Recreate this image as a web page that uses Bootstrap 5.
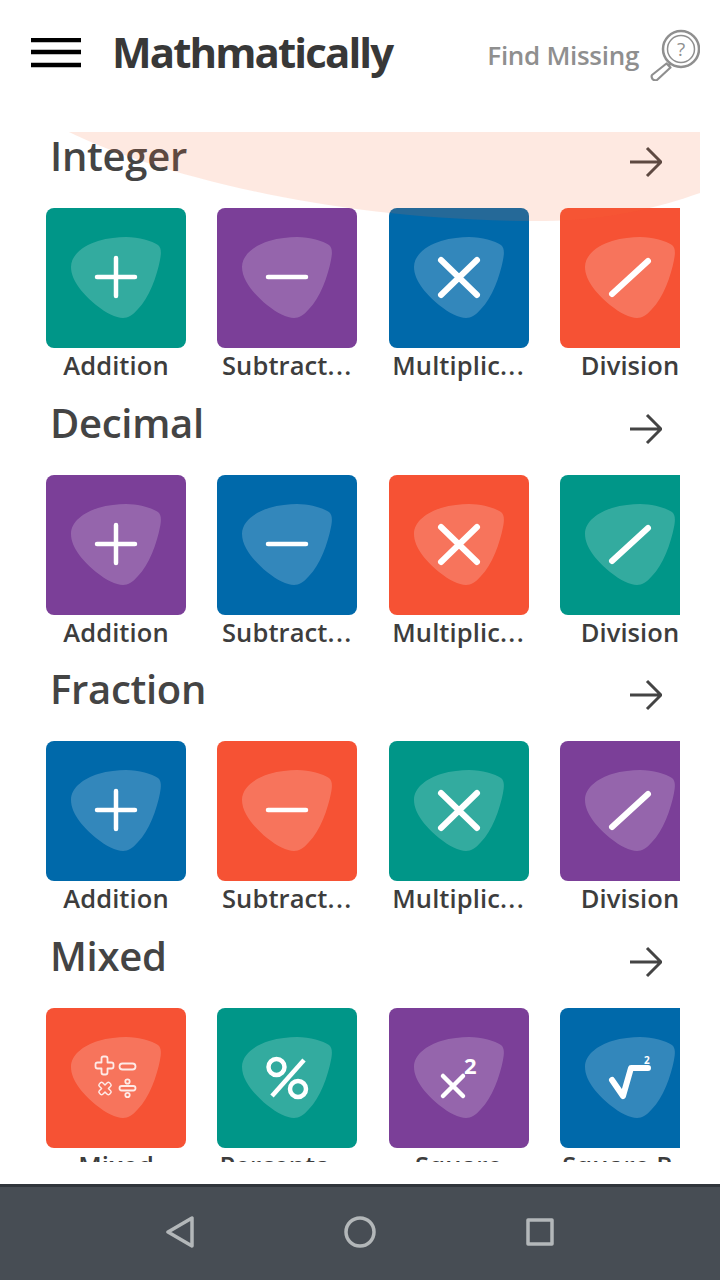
<!DOCTYPE html>
<html lang="en">
<head>
    <meta charset="UTF-8">
    <meta name="viewport" content="width=device-width, initial-scale=1.0">
    <link rel="stylesheet" href="https://cdn.jsdelivr.net/npm/bootstrap@5.3.0/dist/css/bootstrap.min.css">
    <title>Mathmatically</title>
    <style>
        html, body { height: 100%; }
        body {
            width: 720px;
            height: 1280px;
            overflow: hidden;
            background: #fff;
            font-family: "Open Sans", "Liberation Sans", sans-serif;
            color: #444;
        }
        .page { position: relative; height: 1280px; }

        .top-bar { height: 132px; padding: 0 20px 27px 31px; }
        .menu-btn { width: 50px; height: 30px; margin-right: 31px; line-height: 0; }
        .app-title { font-size: 42px; font-weight: 700; letter-spacing: -1.9px; color: #383838; margin: 0; }
        .find-text { font-size: 26px; font-weight: 600; letter-spacing: -.3px; color: #8f8f8f; margin: 6px 11px 0 0; }

        .sheet { height: 1030px; padding: 0 40px 0 46px; overflow: hidden; }
        .topic { height: 266.67px; }
        .topic-head { height: 76px; padding: 0 18px 0 4px; }
        .topic-name { font-size: 40px; line-height: 48px; font-weight: 600; letter-spacing: -.3px; color: #444; margin: 0; }
        .topic-arrow { margin-top: 14px; }
        .tile-row { gap: 31.33px; }
        .tile-col { flex: 0 0 140px; width: 140px; }
        /* the fourth column runs off the right side of the scroller */
        .tile-col:last-child { flex-basis: 120px; width: 120px; overflow: hidden; }
        .tile { display: block; width: 140px; height: 140px; border-radius: 8px; }
        .tile-col:last-child .tile { width: 120px; border-radius: 8px 0 0 8px; }
        .tile-name {
            display: block;
            width: 140px;
            font-size: 25.5px;
            line-height: 34px;
            font-weight: 600;
            letter-spacing: .1px;
            text-align: center;
            white-space: nowrap;
            color: #3d3d3d;
        }
        .dots { letter-spacing: 1.4px; }
        .teal { background: #009688; }
        .purple { background: #7b3f98; }
        .blue { background: #0069aa; }
        .orange { background: #f65234; }

        .blob { fill: #fff; fill-opacity: .2; }
        .glyph { fill: none; stroke: #fff; stroke-width: 4.5; stroke-linecap: round; stroke-linejoin: round; }
        .glyph-bold { stroke-width: 6; }
        .glyph-butt { stroke-linecap: butt; }
        .glyph-thin { fill: none; stroke: #fff; stroke-opacity: .85; stroke-width: 1.8; stroke-linejoin: round; }
        .glyph-num { fill: #fff; font-family: "Open Sans", sans-serif; font-weight: 700; }

        /* pink wash that sits on top of the first topic */
        .wash { position: absolute; left: 0; top: 0; pointer-events: none; }

        .sys-bar { height: 96px; margin-top: 22px; padding: 0 150px 3px; background: #474d54; border-top: 3px solid #30353b; }
        .sys-bar svg { fill: none; stroke: #b3b7b9; stroke-width: 3.5; stroke-linejoin: round; }
        .sys-slot { width: 60px; }
    </style>
</head>
<body>
    <svg width="0" height="0" class="position-absolute">
        <defs>
            <path id="blob" class="blob" d="M25 59C25 46 39 37 52 33C62 30 72 29 80 29C93 29 106 33 112 37C116 40 115 47 114 52C111 68 103 90 92 101C87 107 82 110 77 110C70 110 60 105 50 97C38 87 25 73 25 59Z"/>
            <path id="cross" d="M55.500 50.500a2 2 0 0 1 2 -2h2a2 2 0 0 1 2 2v4h4a2 2 0 0 1 2 2v2a2 2 0 0 1 -2 2h-4v4a2 2 0 0 1 -2 2h-2a2 2 0 0 1 -2 -2v-4h-4a2 2 0 0 1 -2 -2v-2a2 2 0 0 1 2 -2h4z"/>
            <symbol id="plus" viewBox="0 0 140 140"><use href="#blob"/><path class="glyph" d="M70 50V88M51 69H89"/></symbol>
            <symbol id="minus" viewBox="0 0 140 140"><use href="#blob"/><path class="glyph" d="M51 69H89"/></symbol>
            <symbol id="times" viewBox="0 0 140 140"><use href="#blob"/><path class="glyph glyph-bold" d="M52 52L88 87M88 52L52 87"/></symbol>
            <symbol id="slash" viewBox="0 0 140 140"><use href="#blob"/><path class="glyph glyph-bold" d="M52 86L88 53"/></symbol>
            <symbol id="mixed" viewBox="0 0 140 140">
                <use href="#blob"/>
                <g class="glyph-thin">
                    <use href="#cross"/>
                    <rect x="73.500" y="55.500" width="16" height="6" rx="3"/>
                    <use href="#cross" transform="translate(59 80.500) rotate(45) scale(.8) translate(-58.500 -57.500)"/>
                    <rect x="73.500" y="78" width="16" height="4.500" rx="2.200"/>
                    <circle cx="81.500" cy="73.500" r="2.200"/>
                    <circle cx="81.500" cy="87" r="2.200"/>
                </g>
            </symbol>
            <symbol id="percent" viewBox="0 0 140 140">
                <use href="#blob"/>
                <circle class="glyph" cx="59.500" cy="59" r="8"/>
                <circle class="glyph" cx="81" cy="81" r="8"/>
                <path class="glyph glyph-butt" d="M87 52L55 88"/>
            </symbol>
            <symbol id="square" viewBox="0 0 140 140">
                <use href="#blob"/>
                <path class="glyph" d="M54 68L74 88M74 68L54 88"/>
                <text class="glyph-num" x="75" y="66" font-size="22">2</text>
            </symbol>
            <symbol id="root" viewBox="0 0 140 140">
                <use href="#blob"/>
                <path class="glyph glyph-bold" d="M52 72L63 88L71 60H88"/>
                <text class="glyph-num" x="84" y="56" font-size="10">2</text>
            </symbol>
            <symbol id="go" viewBox="0 0 32 32">
                <path d="M0 16H31M17 2L31 16L17 30" fill="none" stroke="currentColor" stroke-width="3"/>
            </symbol>
        </defs>
    </svg>

    <div class="page d-flex flex-column">
        <header class="top-bar navbar flex-nowrap justify-content-start">
            <button class="menu-btn btn border-0 rounded-0 p-0" type="button" aria-label="Menu">
                <svg width="50" height="30" viewBox="0 0 50 30"><path d="M0 2H50M0 14H50M0 27H50" stroke="#000" stroke-width="4.500"/></svg>
            </button>
            <h1 class="app-title">Mathmatically</h1>
            <div class="d-flex align-items-center ms-auto">
                <span class="find-text">Find Missing</span>
                <svg width="50" height="52" viewBox="0 0 50 52" class="mt-1" fill="none" stroke="#8f8f8f">
                    <circle cx="31" cy="20" r="18" stroke-width="2.500"/>
                    <circle cx="31" cy="20" r="13.500" stroke-width="1.500"/>
                    <path d="M19 34L21 36M16.500 34.500L20.500 38.500L7 51Q4.500 52 2.500 50Q1 48 2 46Z" stroke-width="2.200" stroke-linejoin="round"/>
                    <text x="31" y="27" text-anchor="middle" fill="#8f8f8f" stroke="none" font-family="'Open Sans', sans-serif" font-size="19">?</text>
                </svg>
            </div>
        </header>

        <main class="sheet">
            <section class="topic">
                <div class="topic-head d-flex justify-content-between">
                    <h2 class="topic-name">Integer</h2>
                    <svg class="topic-arrow" width="32" height="32"><use href="#go"/></svg>
                </div>
                <div class="tile-row d-flex">
                    <div class="tile-col"><svg class="tile teal" viewBox="0 0 140 140"><use href="#plus"/></svg><span class="tile-name">Addition</span></div>
                    <div class="tile-col"><svg class="tile purple" viewBox="0 0 140 140"><use href="#minus"/></svg><span class="tile-name">Subtract<span class="dots">...</span></span></div>
                    <div class="tile-col"><svg class="tile blue" viewBox="0 0 140 140"><use href="#times"/></svg><span class="tile-name">Multiplic<span class="dots">...</span></span></div>
                    <div class="tile-col"><svg class="tile orange" viewBox="0 0 120 140" preserveAspectRatio="xMinYMin slice"><use href="#slash" width="140" height="140"/></svg><span class="tile-name">Division</span></div>
                </div>
            </section>
            <section class="topic">
                <div class="topic-head d-flex justify-content-between">
                    <h2 class="topic-name">Decimal</h2>
                    <svg class="topic-arrow" width="32" height="32"><use href="#go"/></svg>
                </div>
                <div class="tile-row d-flex">
                    <div class="tile-col"><svg class="tile purple" viewBox="0 0 140 140"><use href="#plus"/></svg><span class="tile-name">Addition</span></div>
                    <div class="tile-col"><svg class="tile blue" viewBox="0 0 140 140"><use href="#minus"/></svg><span class="tile-name">Subtract<span class="dots">...</span></span></div>
                    <div class="tile-col"><svg class="tile orange" viewBox="0 0 140 140"><use href="#times"/></svg><span class="tile-name">Multiplic<span class="dots">...</span></span></div>
                    <div class="tile-col"><svg class="tile teal" viewBox="0 0 120 140" preserveAspectRatio="xMinYMin slice"><use href="#slash" width="140" height="140"/></svg><span class="tile-name">Division</span></div>
                </div>
            </section>
            <section class="topic">
                <div class="topic-head d-flex justify-content-between">
                    <h2 class="topic-name">Fraction</h2>
                    <svg class="topic-arrow" width="32" height="32"><use href="#go"/></svg>
                </div>
                <div class="tile-row d-flex">
                    <div class="tile-col"><svg class="tile blue" viewBox="0 0 140 140"><use href="#plus"/></svg><span class="tile-name">Addition</span></div>
                    <div class="tile-col"><svg class="tile orange" viewBox="0 0 140 140"><use href="#minus"/></svg><span class="tile-name">Subtract<span class="dots">...</span></span></div>
                    <div class="tile-col"><svg class="tile teal" viewBox="0 0 140 140"><use href="#times"/></svg><span class="tile-name">Multiplic<span class="dots">...</span></span></div>
                    <div class="tile-col"><svg class="tile purple" viewBox="0 0 120 140" preserveAspectRatio="xMinYMin slice"><use href="#slash" width="140" height="140"/></svg><span class="tile-name">Division</span></div>
                </div>
            </section>
            <section class="topic">
                <div class="topic-head d-flex justify-content-between">
                    <h2 class="topic-name">Mixed</h2>
                    <svg class="topic-arrow" width="32" height="32"><use href="#go"/></svg>
                </div>
                <div class="tile-row d-flex">
                    <div class="tile-col"><svg class="tile orange" viewBox="0 0 140 140"><use href="#mixed"/></svg><span class="tile-name">Mixed</span></div>
                    <div class="tile-col"><svg class="tile teal" viewBox="0 0 140 140"><use href="#percent"/></svg><span class="tile-name">Percenta<span class="dots">...</span></span></div>
                    <div class="tile-col"><svg class="tile purple" viewBox="0 0 140 140"><use href="#square"/></svg><span class="tile-name">Square</span></div>
                    <div class="tile-col"><svg class="tile blue" viewBox="0 0 120 140" preserveAspectRatio="xMinYMin slice"><use href="#root" width="140" height="140"/></svg><span class="tile-name">Square R<span class="dots">...</span></span></div>
                </div>
            </section>
        </main>

        <nav class="sys-bar d-flex align-items-center justify-content-between">
            <div class="sys-slot d-flex justify-content-center">
                <svg width="28" height="32" viewBox="0 0 28 32"><path d="M26 2V30L2 16Z"/></svg>
            </div>
            <div class="sys-slot d-flex justify-content-center">
                <svg width="32" height="32" viewBox="0 0 32 32"><circle cx="16" cy="16" r="14"/></svg>
            </div>
            <div class="sys-slot d-flex justify-content-center">
                <svg width="28" height="28" viewBox="0 0 28 28"><rect x="2" y="2" width="24" height="24"/></svg>
            </div>
        </nav>

        <svg class="wash" width="720" height="240" viewBox="0 0 720 240">
            <path d="M69 132C150 172 330 222 545 221C610 220 660 207 700 193V132Z" fill="#f96a33" fill-opacity=".15"/>
        </svg>
    </div>
</body>
</html>
